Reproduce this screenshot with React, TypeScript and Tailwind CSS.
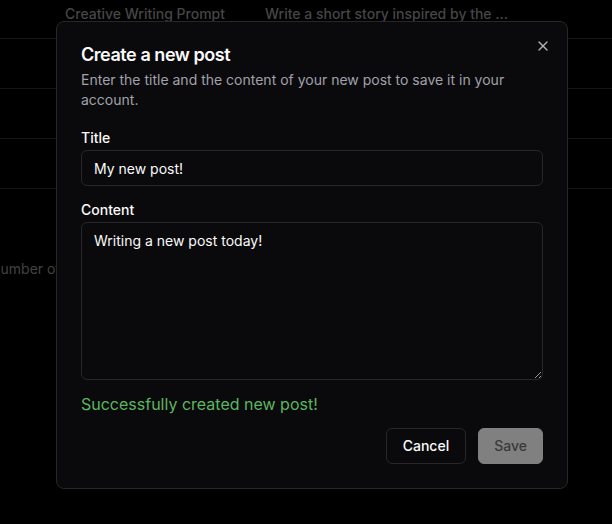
import React from "react";

export default function App() {
  const rows = [
    { a: "Creative Writing Prompt", b: "Write a short story inspired by the ..." },
    { a: "", b: "" },
    { a: "", b: "" },
    { a: "", b: "" },
  ];
  return (
    <div
      className="relative w-[612px] h-[524px] overflow-hidden bg-black"
      style={{ fontFamily: "Inter, 'Noto Sans', sans-serif" }}
    >
      {/* background page (dimmed) */}
      <div className="-mt-[11px]">
        {rows.map((r, i) => (
          <div
            key={i}
            className="flex h-[50px] items-center border-b border-[#151515] text-sm font-medium text-[#464646]"
          >
            <div className="w-[265px] shrink-0 pl-[65px] whitespace-nowrap">{r.a}</div>
            <div className="whitespace-nowrap">{r.b}</div>
          </div>
        ))}
      </div>
      <div className="mt-[70px] -ml-[10px] text-sm leading-5 text-[#424242] whitespace-nowrap">
        Number of words
      </div>

      {/* dialog */}
      <div className="absolute left-[56px] top-[21px] w-[512px] rounded-lg border border-[#27272a] bg-[#0a0a0c] p-6">
        <button className="absolute right-4 top-4 h-4 w-4 text-[#fafafa] opacity-70">
          <svg
            width="16"
            height="16"
            viewBox="0 0 24 24"
            fill="none"
            stroke="currentColor"
            strokeWidth="2"
            strokeLinecap="round"
            strokeLinejoin="round"
          >
            <path d="M18 6 6 18" />
            <path d="m6 6 12 12" />
          </svg>
        </button>
        <div className="flex flex-col gap-1.5">
          <h2 className="text-lg font-semibold leading-none tracking-tight text-[#fafafa]">
            Create a new post
          </h2>
          <p className="text-sm leading-5 text-[#a1a1aa]">
            Enter the title and the content of your new post to save it in your account.
          </p>
        </div>
        <div className="mt-[21px] text-sm font-medium leading-none text-[#fafafa]">Title</div>
        <input
          className="mt-[5px] block h-9 w-full rounded-md border border-[#27272a] bg-transparent px-3 text-sm text-[#fafafa] outline-none"
          defaultValue="My new post!"
        />
        <div className="mt-[17px] text-sm font-medium leading-none text-[#fafafa]">Content</div>
        <textarea
          className="mt-[5px] block h-[158px] w-full resize-y rounded-md border border-[#27272a] bg-transparent px-3 py-2 text-sm leading-5 text-[#fafafa] outline-none [color-scheme:dark]"
          defaultValue="Writing a new post today!"
        />
        <p className="mt-3 text-base leading-6 text-[#5cb660]">Successfully created new post!</p>
        <div className="mt-3 flex justify-end gap-3">
          <button className="h-9 rounded-md border border-[#27272a] bg-[#0a0a0c] px-4 text-sm font-medium text-[#fafafa]">
            Cancel
          </button>
          <button className="h-9 rounded-md border border-[#808080] bg-[#808080] px-[15px] text-sm font-medium text-[#3a3a3a]">
            Save
          </button>
        </div>
      </div>
    </div>
  );
}
